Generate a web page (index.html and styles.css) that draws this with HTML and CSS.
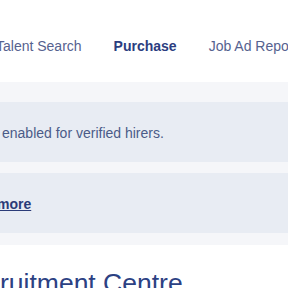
FILE: index.html
```html
<!DOCTYPE html>
<html lang="en">
<head>
<meta charset="utf-8">
<link rel="stylesheet" href="styles.css">
</head>
<body>
<nav class="tabs">
  <a class="tab">Talent Search</a>
  <a class="tab active">Purchase</a>
  <a class="tab">Job Ad Reports</a>
</nav>
<section class="band">
  <div class="notice"><p class="notice-text">enabled for verified hirers.</p></div>
  <div class="notice"><a class="notice-link">more</a></div>
</section>
<main class="content">
  <h1 class="title">ruitment Centre</h1>
</main>
</body>
</html>
```
FILE: styles.css
```css
html, body {
  margin: 0;
  padding: 0;
  background: #ffffff;
  overflow: hidden;
  font-family: "Liberation Sans", Arial, sans-serif;
}
.tabs {
  height: 82px;
  box-sizing: border-box;
  padding-top: 37px;
  display: flex;
  gap: 32px;
  margin-left: -4px;
  white-space: nowrap;
  font-size: 14px;
  line-height: 18px;
}
.tab {
  color: #56628f;
  flex: none;
}
.tab.active {
  color: #2b3d80;
  font-weight: bold;
}
.band {
  background: #f5f6f9;
  padding: 20px 0 12px;
  display: flex;
  flex-direction: column;
  gap: 11px;
}
.notice {
  background: #e8ecf3;
  height: 60px;
  display: flex;
  align-items: center;
  font-size: 14px;
}
.notice-text {
  margin: 1px 0 0 2px;
  color: #4b5b88;
  white-space: nowrap;
}
.notice-link {
  margin: 2px 0 0 -3px;
  color: #2b3b78;
  font-weight: bold;
  text-decoration: underline;
}
.content {
  padding-top: 23px;
}
.title {
  margin: 0;
  font-size: 26.5px;
  font-weight: normal;
  color: #2c4183;
  white-space: nowrap;
}
```
